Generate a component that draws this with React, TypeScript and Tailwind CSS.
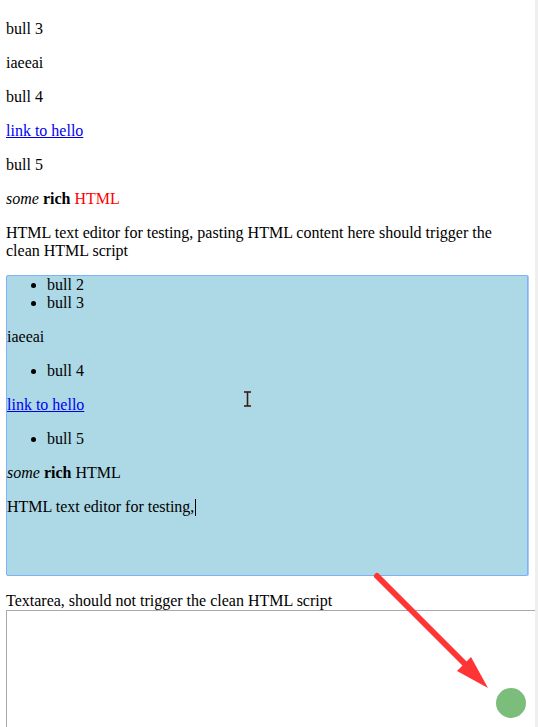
import React from "react";

export default function App() {
  return (
    <div className="relative flex h-[727px] overflow-hidden bg-white text-[16px] leading-[18px] text-black font-['Liberation_Serif',serif]">
      <div className="flex-1 overflow-hidden pl-[6px] pt-[20px]">
        <div className="flex w-[522px] flex-col gap-4">
          <p>bull 3</p>
          <p>iaeeai</p>
          <p>bull 4</p>
          <p>
            <a className="text-[#0000ee] underline">link to hello</a>
          </p>
          <p>bull 5</p>
          <p>
            <i>some</i> <b>rich</b> <span className="text-[#ff0000]">HTML</span>
          </p>
          <p>
            HTML text editor for testing, pasting HTML content here should trigger the clean HTML script
          </p>
        </div>
        <div className="mt-[15px] h-[301px] w-[522px] rounded-[2px] border border-[#80b0f6] bg-[#add8e6] shadow-[1px_0_0_#a9c9f8]">
          <ul className="mb-4 list-disc pl-10">
            <li>bull 2</li>
            <li>bull 3</li>
          </ul>
          <p className="mb-4">iaeeai</p>
          <ul className="mb-4 list-disc pl-10">
            <li>bull 4</li>
          </ul>
          <p className="mb-4">
            <a className="text-[#0000ee] underline">link to hello</a>
          </p>
          <ul className="mb-4 list-disc pl-10">
            <li>bull 5</li>
          </ul>
          <p className="mb-4">
            <i>some</i> <b>rich</b> HTML
          </p>
          <p>
            HTML text editor for testing,
            <span className="ml-[1px] inline-block h-[17px] w-px bg-black align-[-4px]" />
          </p>
        </div>
        <div className="mt-4">Textarea, should not trigger the clean HTML script</div>
        <textarea
          className="block h-[140px] w-[540px] resize-none border border-[#a9a9a9] bg-white outline-none"
          defaultValue=""
        />
      </div>
      <div className="w-[3px] bg-[#efefef]" />
      <svg
        className="pointer-events-none absolute left-0 top-0"
        width="538"
        height="727"
        viewBox="0 0 538 727"
      >
        <line x1="377" y1="576" x2="466" y2="665" stroke="#ff3535" strokeWidth="6" strokeLinecap="round" />
        <polygon points="488,688 457,671 471,657" fill="#ff3535" />
        <circle cx="511" cy="703" r="15" fill="#7bbd7b" />
        <g stroke="#3b1e14" strokeWidth="1.6">
          <line x1="247.5" y1="392" x2="247.5" y2="406" />
          <line x1="244" y1="392" x2="251" y2="392" />
          <line x1="244" y1="406" x2="251" y2="406" />
        </g>
      </svg>
    </div>
  );
}
